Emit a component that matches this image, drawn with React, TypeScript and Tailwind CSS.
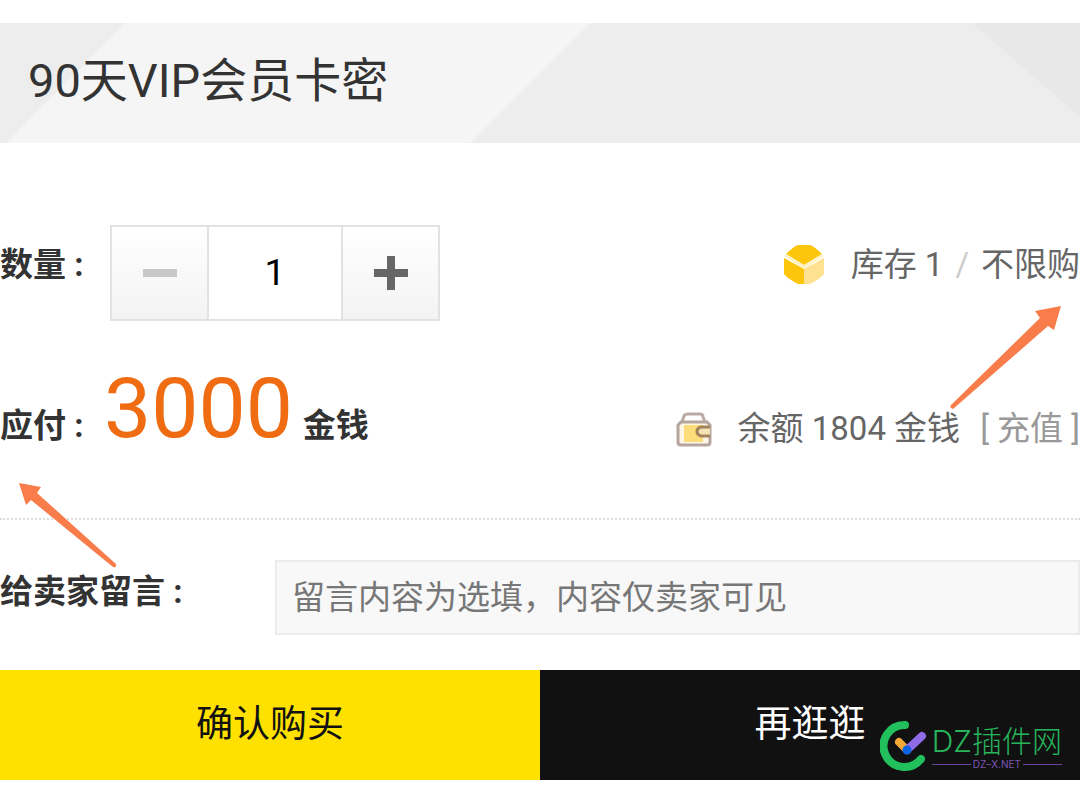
import { useState } from 'react';

function BoxIcon() {
  return (
    <svg viewBox="0 0 42 40" className="h-10 w-[42px] shrink-0" aria-hidden="true">
      <path d="M3 9 Q10 2 15 0 H27 Q32 2 39 9 L21 20 Z" fill="#fcc60b" />
      <path d="M1 13 L21 24 V39 H15 Q5 34 1 29 Z" fill="#fdc60c" />
      <path d="M41 13 L21 24 V39 H27 Q37 34 41 29 Z" fill="#fee291" />
      <path d="M2 10 L21 22 L40 10" fill="none" stroke="#fff3c4" strokeWidth="3" />
    </svg>
  );
}

function WalletIcon() {
  return (
    <svg viewBox="0 0 36 36" className="h-9 w-9 shrink-0" aria-hidden="true" fill="none">
      <path d="M6 11 L8 5 Q9 3 12 3 H24 Q27 3 27 6 L29 11" fill="#fff" stroke="#b9aaa3" strokeWidth="3" />
      <path d="M5 11 H31 L34 14 V31 Q34 34 31 34 H5 Q2 34 2 31 V14 Z" fill="#fdf6e6" stroke="#b5a59e" strokeWidth="3" />
      <rect x="8" y="14" width="19" height="17" fill="#fddc7a" />
      <path d="M34 16 H25 Q21 17 21 20.500 Q21 24 25 25 H34" fill="#f3e2b5" stroke="#a5835a" strokeWidth="3" />
    </svg>
  );
}

function Watermark() {
  return (
    <div className="pointer-events-none absolute right-[18px] bottom-[8px] flex items-center gap-1">
      <svg viewBox="0 0 48 52" className="h-[52px] w-12" fill="none" strokeLinecap="round" aria-hidden="true">
        <path d="M25 5 A21 21 0 1 0 41 39" stroke="#22c05c" strokeWidth="8" />
        <path d="M19 22 L27 30" stroke="#f6a934" strokeWidth="8" />
        <path d="M27 30 L42 16" stroke="#8f6be8" strokeWidth="8" />
        <circle cx="27" cy="30" r="4.500" fill="#0a63e0" />
      </svg>
      <div className="flex flex-col">
        <span className="font-['Inter','Noto_Sans_CJK_SC',sans-serif] text-[30px] leading-9 font-light whitespace-nowrap text-[#27b55c]">
          DZ插件网
        </span>
        <span className="flex items-center gap-[2px] font-['Inter',sans-serif] text-[10px] leading-[10px] text-[#7d57b5]">
          <i className="h-px flex-1 bg-[#68459a]" />
          DZ–X.NET
          <i className="h-px flex-1 bg-[#68459a]" />
        </span>
      </div>
    </div>
  );
}

export default function App() {
  const [count, setCount] = useState(1);
  const [message, setMessage] = useState('');

  return (
    <div className="relative w-full overflow-hidden bg-white pt-[23px] pb-1.5 font-['Roboto','Noto_Sans_CJK_SC',sans-serif] text-[33px] text-[#333]">
      {/* Title */}
      <header className="relative flex h-[120px] items-center bg-[#ededed] px-7 pb-1">
        <svg
          viewBox="0 0 1080 120"
          preserveAspectRatio="none"
          className="absolute inset-0 h-full w-full"
          aria-hidden="true"
        >
          <path d="M125 0 H590 L470 120 H6 Z" fill="#f5f5f5" />
          <path d="M972 0 H1080 V94 Z" fill="#e8e8e8" />
        </svg>
        <h1 className="relative text-[47px] leading-[56px]">90天VIP会员卡密</h1>
      </header>

      <form onSubmit={(e) => e.preventDefault()}>
        {/* Quantity */}
        <div className="mt-[82px] flex h-24 items-start justify-between">
          <div className="flex">
            <label htmlFor="count" className="w-[110px] leading-[80px] font-bold whitespace-nowrap">
              数量 :
            </label>
            <div className="flex h-24 w-[330px] border-2 border-[#e2e2e2]">
              <button
                type="button"
                aria-label="减少"
                onClick={() => setCount(Math.max(1, count - 1))}
                className="flex w-[95px] items-center justify-center bg-linear-to-b from-white to-[#f3f3f3]"
              >
                <span className="h-2 w-[34px] bg-[#c8c8c8]" />
              </button>
              <input
                id="count"
                value={count}
                onChange={(e) => setCount(Number(e.target.value) || 1)}
                className="min-w-0 flex-1 border-x-2 border-[#e2e2e2] text-center text-[37px] text-black outline-none"
              />
              <button
                type="button"
                aria-label="增加"
                onClick={() => setCount(count + 1)}
                className="flex w-[95px] items-center justify-center bg-linear-to-b from-white to-[#f3f3f3]"
              >
                <svg viewBox="0 0 34 34" className="h-[34px] w-[34px]" aria-hidden="true">
                  <path d="M13 0 H21 V13 H34 V21 H21 V34 H13 V21 H0 V13 H13 Z" fill="#666" />
                </svg>
              </button>
            </div>
          </div>
          <p className="flex items-center leading-[80px] whitespace-nowrap text-[#666]">
            <BoxIcon />
            <span className="ml-[26px]">库存 1</span>
            <span className="mx-3 text-[#ccc]">/</span>
            <span>不限购</span>
          </p>
        </div>

        {/* Price */}
        <div className="mt-[38px] flex items-start justify-between">
          <p className="flex items-baseline leading-[100px] font-bold whitespace-nowrap">
            <span className="w-[104px]">应付 :</span>
            <span className="text-[84px] font-normal text-[#f06c12]">3000</span>
            <span className="ml-2.5">金钱</span>
          </p>
          <p className="mt-11 flex items-center leading-[52px] whitespace-nowrap text-[#666]">
            <WalletIcon />
            <span className="ml-[26px]">余额 1804 金钱</span>
            <a href="#recharge" className="ml-5 text-[#999]">
              [ 充值 ]
            </a>
          </p>
        </div>

        {/* Message */}
        <div className="mt-[42px] flex items-start border-t-2 border-dotted border-[#ddd] pt-10">
          <label htmlFor="message" className="w-[275px] shrink-0 leading-[64px] font-bold">
            给卖家留言 :
          </label>
          <input
            id="message"
            value={message}
            onChange={(e) => setMessage(e.target.value)}
            placeholder="留言内容为选填，内容仅卖家可见"
            className="h-[75px] min-w-0 flex-1 border-2 border-[#ebebeb] bg-[#f8f8f8] px-[15px] outline-none placeholder:text-[#777]"
          />
        </div>

        {/* Actions */}
        <div className="relative mt-[35px] grid h-[110px] grid-cols-2 text-[37px]">
          <button type="submit" className="bg-[#ffe100] text-[#111]">
            确认购买
          </button>
          <button type="button" className="bg-[#111] text-white">
            再逛逛
          </button>
          <Watermark />
        </div>
      </form>

      {/* Pointer arrows */}
      <svg
        viewBox="0 0 112 106"
        className="pointer-events-none absolute top-[304px] right-[18px] h-[106px] w-28"
        aria-hidden="true"
      >
        <path d="M111 2 L104 26 L98 22 L3 105 Q-1 104 1 101 L90 14 L85 7 Z" fill="#f97d4a" />
      </svg>
      <svg
        viewBox="0 0 100 86"
        className="pointer-events-none absolute top-[482px] left-[18px] h-[86px] w-[100px]"
        aria-hidden="true"
      >
        <path d="M1 1 L23 5 L19 11 L98 82 Q99 86 95 85 L13 18 L8 23 Z" fill="#f97d4a" />
      </svg>
    </div>
  );
}
